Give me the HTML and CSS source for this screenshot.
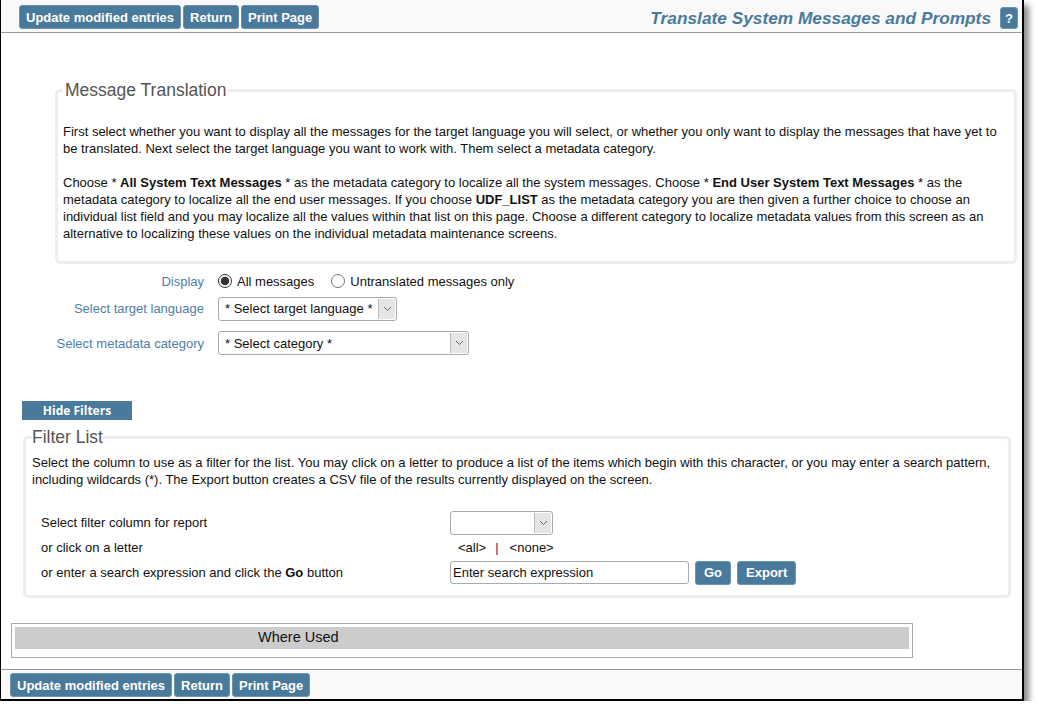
FILE: index.html
```html
<!DOCTYPE html>
<html>
<head>
<meta charset="utf-8">
<title>Translate System Messages and Prompts</title>
<link rel="stylesheet" href="styles.css">
</head>
<body>
<div class="frame">
  <div class="topbar">
    <div class="btns">
      <button class="btn">Update modified entries</button>
      <button class="btn">Return</button>
      <button class="btn">Print Page</button>
    </div>
    <div class="titlebox">
      <span class="title">Translate System Messages and Prompts</span>
      <button class="help">?</button>
    </div>
  </div>

  <div class="main">
    <fieldset class="mt">
      <legend>Message Translation</legend>
      <p>First select whether you want to display all the messages for the target language you will select, or whether you only want to display the messages that have yet to be translated. Next select the target language you want to work with. Them select a metadata category.</p>
      <p>Choose * <b>All System Text Messages</b> * as the metadata category to localize all the system messages. Choose * <b>End User System Text Messages</b> * as the metadata category to localize all the end user messages. If you choose <b>UDF_LIST</b> as the metadata category you are then given a further choice to choose an individual list field and you may localize all the values within that list on this page. Choose a different category to localize metadata values from this screen as an alternative to localizing these values on the individual metadata maintenance screens.</p>
    </fieldset>

    <div class="form">
      <div class="lbl">Display</div>
      <div class="ctl radios">
        <label class="radio"><input type="radio" name="disp" checked> All messages</label>
        <label class="radio"><input type="radio" name="disp"> Untranslated messages only</label>
      </div>
      <div class="lbl">Select target language</div>
      <div class="ctl">
        <span class="sel w178"><select><option>* Select target language *</option></select><span class="arrow"><svg width="9" height="6" viewBox="0 0 9 6"><path d="M1 1 L4.5 4.5 L8 1" fill="none" stroke="#666" stroke-width="1"/></svg></span></span>
      </div>
      <div class="lbl">Select metadata category</div>
      <div class="ctl">
        <span class="sel w250"><select><option>* Select category *</option></select><span class="arrow"><svg width="9" height="6" viewBox="0 0 9 6"><path d="M1 1 L4.5 4.5 L8 1" fill="none" stroke="#666" stroke-width="1"/></svg></span></span>
      </div>
    </div>

    <button class="hide">Hide Filters</button>

    <fieldset class="fl">
      <legend>Filter List</legend>
      <p>Select the column to use as a filter for the list. You may click on a letter to produce a list of the items which begin with this character, or you may enter a search pattern, including wildcards (*). The Export button creates a CSV file of the results currently displayed on the screen.</p>
      <div class="fgrid">
        <div class="flbl">Select filter column for report</div>
        <div class="fctl"><span class="sel w102"><select><option></option></select><span class="arrow"><svg width="9" height="6" viewBox="0 0 9 6"><path d="M1 1 L4.5 4.5 L8 1" fill="none" stroke="#666" stroke-width="1"/></svg></span></span></div>
        <div class="flbl">or click on a letter</div>
        <div class="fctl letters"><a>&lt;all&gt;</a><span class="bar">|</span><a>&lt;none&gt;</a></div>
        <div class="flbl">or enter a search expression and click the <b>Go</b> button</div>
        <div class="fctl search">
          <input type="text" value="Enter search expression">
          <button class="btn small">Go</button>
          <button class="btn small">Export</button>
        </div>
      </div>
    </fieldset>

    <div class="where">
      <div class="wbar">Where Used</div>
    </div>
  </div>

  <div class="footer">
    <div class="btns">
      <button class="btn">Update modified entries</button>
      <button class="btn">Return</button>
      <button class="btn">Print Page</button>
    </div>
  </div>
</div>
</body>
</html>
```

FILE: styles.css
```css
html, body {
  margin: 0;
  padding: 0;
  background: #ffffff;
}
body {
  font-family: "Liberation Sans", Arial, sans-serif;
  font-size: 13px;
  color: #111;
}
.frame {
  width: 1021px;
  height: 699px;
  border-left: 1px solid #000;
  border-right: 2px solid #000;
  border-bottom: 2px solid #000;
  display: flex;
  flex-direction: column;
  background: #fff;
  box-shadow: 5px 5px 6px rgba(0, 0, 0, 0.45);
}
.topbar {
  height: 32px;
  flex: none;
  background: #f9f9f9;
  border-bottom: 1px solid #999;
  display: flex;
  justify-content: space-between;
  align-items: flex-start;
  padding-left: 18px;
  padding-right: 4px;
}
.btns {
  display: flex;
  gap: 2px;
  margin-top: 5px;
}
.btn {
  font-family: "Liberation Sans", Arial, sans-serif;
  font-weight: bold;
  font-size: 13px;
  color: #fff;
  background: #4a7a9b;
  border: 1px solid #6d93ae;
  border-radius: 3px;
  height: 24px;
  padding: 0 6px;
  margin: 0;
  cursor: pointer;
}
.titlebox {
  display: flex;
  align-items: center;
  gap: 9px;
  margin-top: 7px;
}
.title {
  font-weight: bold;
  font-style: italic;
  font-size: 17.3px;
  color: #4a7a9b;
}
.help {
  width: 18px;
  height: 22px;
  padding: 0;
  margin: 0;
  background: #4a7a9b;
  color: #fff;
  font-weight: bold;
  font-size: 13px;
  font-family: "Liberation Sans", Arial, sans-serif;
  border: 1px solid #6d93ae;
  border-radius: 3px;
}
.main {
  flex: 1;
  display: flex;
  flex-direction: column;
  align-items: flex-start;
}
fieldset {
  border: 3px solid #eeeeee;
  border-radius: 5px;
  margin: 0;
}
legend {
  font-size: 17.5px;
  color: #555;
  line-height: 20px;
}
p {
  margin: 0;
  line-height: 17px;
}
.mt {
  margin-top: 47px;
  margin-left: 54px;
  width: 946px;
  padding: 23px 5px 19px 5px;
}
.mt legend {
  padding: 0 2px;
}
.mt p + p {
  margin-top: 17px;
}
.form {
  display: grid;
  grid-template-columns: 203px auto;
  grid-template-rows: 28px 27px 42px;
  column-gap: 14px;
  align-items: center;
  margin-top: 3px;
  font-size: 13px;
}
.lbl {
  text-align: right;
  color: #4f7eab;
}
.radios {
  display: flex;
  gap: 17px;
  color: #111;
}
.radio {
  display: flex;
  align-items: center;
  gap: 5px;
}
.radio input {
  margin: 0;
  width: 14px;
  height: 14px;
  accent-color: #333;
}
.sel {
  position: relative;
  display: inline-block;
  height: 24px;
}
.sel select {
  appearance: none;
  -webkit-appearance: none;
  width: 100%;
  height: 24px;
  border: 1px solid #aaa;
  border-radius: 3px;
  background: #fff;
  font-family: "Liberation Sans", Arial, sans-serif;
  font-size: 13px;
  color: #111;
  padding: 0 0 0 6px;
  margin: 0;
}
.arrow {
  position: absolute;
  right: 2px;
  top: 2px;
  width: 16px;
  height: 20px;
  background: #e5e5e5;
  border-left: 1px solid #bbb;
  display: flex;
  align-items: center;
  justify-content: center;
  pointer-events: none;
}
.w178 { width: 179px; }
.w250 { width: 251px; }
.w102 { width: 103px; }
.hide {
  margin: 37px 0 0 21px;
  width: 110px;
  height: 19px;
  padding: 0;
  border: none;
  background: #4a7a9b;
  color: #fff;
  font-family: "Open Sans", "Liberation Sans", sans-serif;
  font-weight: bold;
  font-size: 12px;
}
.fl {
  margin-top: 7px;
  margin-left: 22px;
  width: 970px;
  padding: 7px 6px 10px 6px;
}
.fl legend {
  padding: 0;
}
.fgrid {
  display: grid;
  grid-template-columns: 409px auto;
  grid-auto-rows: 25px;
  align-items: center;
  margin-top: 22px;
  margin-left: 9px;
}
.fctl {
  display: flex;
  align-items: center;
}
.letters {
  padding-left: 8px;
  gap: 0;
}
.letters a {
  color: #111;
}
.letters .bar {
  color: #4b2050;
  margin: 0 11px 0 9px;
}
.search input {
  width: 239px;
  height: 23px;
  box-sizing: border-box;
  border: 1px solid #aaa;
  border-radius: 3px;
  font-family: "Liberation Sans", Arial, sans-serif;
  font-size: 13px;
  color: #111;
  padding: 0 2px;
  margin: 0 6px 0 0;
}
.btn.small {
  height: 24px;
  margin-right: 6px;
  padding: 0 8px;
  font-size: 13px;
}
.where {
  margin-top: 25px;
  margin-left: 10px;
  width: 894px;
  border: 1px solid #aaa;
  padding: 3px 3px 8px 3px;
}
.wbar {
  background: #cccccc;
  height: 22px;
  line-height: 21px;
  font-size: 14.5px;
  color: #111;
  padding-left: 243px;
}
.footer {
  flex: none;
  height: 29px;
  border-top: 1px solid #999;
  background: #f9f9f9;
  padding-left: 9px;
}
.footer .btns {
  margin-top: 3px;
}
```
